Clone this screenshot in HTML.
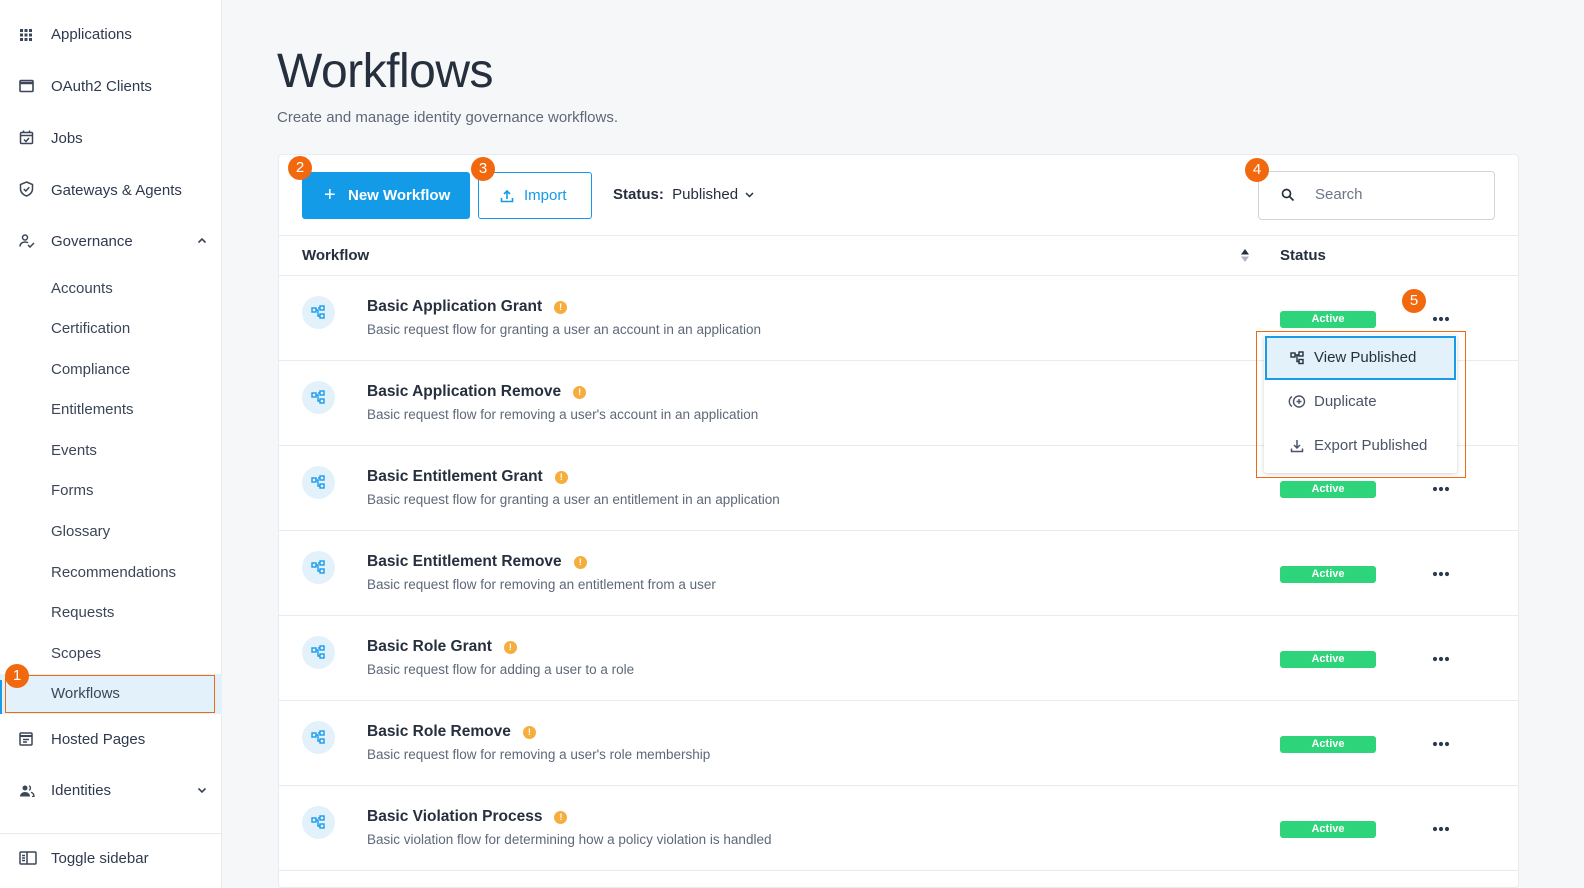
<!DOCTYPE html>
<html><head><meta charset="utf-8"><style>
*{box-sizing:border-box;margin:0;padding:0}
body{width:1584px;height:888px;overflow:hidden;background:#f6f7f9;font-family:"Liberation Sans",sans-serif;color:#2e3a4d;position:relative}
.abs{position:absolute}
.side{left:0;top:0;width:222px;height:888px;background:#fff;border-right:1px solid #e8ebef}
.nav{position:absolute;left:51px;font-size:15px;color:#2e3a4d}
.sub{position:absolute;left:51px;font-size:15px;color:#3b4658}
.ic{position:absolute;left:19px}
.badge{position:absolute;width:24px;height:24px;border-radius:50%;background:#f2680f;color:#fff;font-size:15px;text-align:center;line-height:24px}
.card{left:278px;top:154px;width:1241px;height:734px;background:#fff;border:1px solid #e8ebef;border-radius:4px}
.row{position:absolute;left:278px;width:1241px;height:85px;border-top:1px solid #e8ebef}
.wic{position:absolute;left:24px;top:20px;width:33px;height:33px;border-radius:50%;background:#e3f1fb}
.wic svg{position:absolute;left:9px;top:9px}
.t{position:absolute;left:89px;top:22px;font-size:15.5px;font-weight:bold;color:#262f3d}
.d{position:absolute;left:89px;top:46px;font-size:13.5px;color:#5e6878}
.warn{display:inline-block;width:13px;height:13px;border-radius:50%;background:#f5ae3d;color:#fff;font-size:9px;line-height:13px;text-align:center;margin-left:12px;vertical-align:1px}
.act{position:absolute;left:1002px;top:35px;width:96px;height:17px;background:#2ed47a;color:#fff;font-size:11px;font-weight:bold;text-align:center;line-height:17px;border-radius:3px}
.dots{position:absolute;left:1154px;top:40px}
</style></head><body>
<div class="abs side">
<svg class="ic" style="top:28px" width="14" height="14" viewBox="0 0 14 14" fill="#3b4658"><rect x="1" y="1" width="3" height="3"/><rect x="5.5" y="1" width="3" height="3"/><rect x="10" y="1" width="3" height="3"/><rect x="1" y="5.5" width="3" height="3"/><rect x="5.5" y="5.5" width="3" height="3"/><rect x="10" y="5.5" width="3" height="3"/><rect x="1" y="10" width="3" height="3"/><rect x="5.5" y="10" width="3" height="3"/><rect x="10" y="10" width="3" height="3"/></svg>
<div class="nav" style="top:26px">Applications</div>
<svg class="ic" style="top:79px" width="15" height="14" viewBox="0 0 15 14" fill="none" stroke="#3b4658" stroke-width="1.6"><rect x="1" y="1.5" width="13" height="11" rx="1"/><line x1="1" y1="4" x2="14" y2="4" stroke-width="2.5"/></svg>
<div class="nav" style="top:78px">OAuth2 Clients</div>
<svg class="ic" style="top:130px" width="15" height="15" viewBox="0 0 15 15" fill="none" stroke="#3b4658" stroke-width="1.5"><rect x="1.5" y="2.5" width="12" height="11" rx="1"/><line x1="1.5" y1="5.5" x2="13.5" y2="5.5"/><line x1="4.5" y1="0.5" x2="4.5" y2="3"/><line x1="10.5" y1="0.5" x2="10.5" y2="3"/><path d="M5 9.5l2 2 3-3.5"/></svg>
<div class="nav" style="top:130px">Jobs</div>
<svg class="ic" style="top:181px" width="15" height="16" viewBox="0 0 15 16" fill="none" stroke="#3b4658" stroke-width="1.5"><path d="M7.5 1L13.5 3.5V8c0 3.5-3 6-6 7-3-1-6-3.5-6-7V3.5z"/><path d="M4.8 8l2 2 3.5-3.8"/></svg>
<div class="nav" style="top:182px">Gateways &amp; Agents</div>
<svg class="ic" style="top:234px" width="16" height="14" viewBox="0 0 16 14" fill="none" stroke="#3b4658" stroke-width="1.5"><circle cx="6" cy="3.5" r="2.5"/><path d="M1 12.5c0-3 2.5-4.5 5-4.5 1.3 0 2.3.3 3 .8"/><path d="M9 11l2 2 4-4"/></svg>
<div class="nav" style="top:233px">Governance</div>
<svg class="abs" style="left:197px;top:237px" width="10" height="7" viewBox="0 0 10 7" fill="none" stroke="#3b4658" stroke-width="1.6"><path d="M1.5 5.5L5 2l3.5 3.5"/></svg>
<div class="sub" style="top:280px">Accounts</div>
<div class="sub" style="top:320px">Certification</div>
<div class="sub" style="top:361px">Compliance</div>
<div class="sub" style="top:401px">Entitlements</div>
<div class="sub" style="top:442px">Events</div>
<div class="sub" style="top:482px">Forms</div>
<div class="sub" style="top:523px">Glossary</div>
<div class="sub" style="top:564px">Recommendations</div>
<div class="sub" style="top:604px">Requests</div>
<div class="sub" style="top:645px">Scopes</div>
<div class="abs" style="left:0;top:674px;width:222px;height:40px;background:#e3f1fb"></div>
<div class="abs" style="left:0;top:680px;width:2px;height:34px;background:#1a9be8"></div>
<div class="abs" style="left:5px;top:675px;width:210px;height:38px;border:1px solid #f2680f"></div>
<div class="sub" style="top:685px">Workflows</div>
<div class="badge" style="left:5px;top:664px">1</div>
<svg class="ic" style="top:732px" width="14" height="14" viewBox="0 0 14 14" fill="none" stroke="#3b4658" stroke-width="1.5"><rect x="1" y="1" width="12" height="12" rx="1"/><line x1="1" y1="4" x2="13" y2="4" stroke-width="2"/><line x1="4" y1="7.5" x2="10" y2="7.5"/><line x1="4" y1="10" x2="8" y2="10"/></svg>
<div class="nav" style="top:731px">Hosted Pages</div>
<svg class="ic" style="top:785px" width="16" height="12" viewBox="0 0 16 12" fill="#3b4658"><circle cx="6" cy="3" r="2.5"/><path d="M1 11.5c0-3 2.5-4.5 5-4.5s5 1.5 5 4.5z"/><path d="M10 .8a2.4 2.4 0 010 4.4M12 7.3c1.8.6 3 1.9 3 4.2h-2" fill="none" stroke="#3b4658" stroke-width="1.3"/></svg>
<div class="nav" style="top:782px">Identities</div>
<svg class="abs" style="left:197px;top:787px" width="10" height="7" viewBox="0 0 10 7" fill="none" stroke="#3b4658" stroke-width="1.6"><path d="M1.5 1.5L5 5l3.5-3.5"/></svg>
<div class="abs" style="left:0;top:833px;width:222px;height:1px;background:#e8ebef"></div>
<svg class="ic" style="top:851px" width="18" height="14" viewBox="0 0 18 14" fill="none" stroke="#3b4658" stroke-width="1.5"><rect x="1" y="1" width="16" height="12" rx="1"/><line x1="8" y1="1" x2="8" y2="13"/><line x1="3" y1="4.5" x2="6" y2="4.5"/><line x1="3" y1="7" x2="6" y2="7"/><line x1="3" y1="9.5" x2="6" y2="9.5"/></svg>
<div class="nav" style="top:850px">Toggle sidebar</div>
</div>

<div class="abs" style="left:277px;top:44px;font-size:48px;font-weight:300;color:#262f3d;letter-spacing:-0.5px">Workflows</div>
<div class="abs" style="left:277px;top:109px;font-size:15px;color:#5e6878">Create and manage identity governance workflows.</div>

<div class="abs card"></div>
<div class="abs" style="left:302px;top:172px;width:168px;height:47px;background:#139be8;border-radius:3px;color:#fff;font-size:15px;font-weight:bold;line-height:47px"><span style="position:absolute;left:22px;font-size:20px;font-weight:normal">+</span><span style="position:absolute;left:46px">New Workflow</span></div>
<div class="badge" style="left:288px;top:156px">2</div>
<div class="abs" style="left:478px;top:172px;width:114px;height:47px;border:1px solid #139be8;border-radius:3px;color:#139be8;font-size:15px;line-height:45px">
<svg style="position:absolute;left:21px;top:16px" width="14" height="14" viewBox="0 0 14 14" fill="none" stroke="#139be8" stroke-width="1.6"><path d="M7 10V2M4 5l3-3 3 3M1.5 9v3.5h11V9"/></svg><span style="position:absolute;left:45px">Import</span></div>
<div class="badge" style="left:471px;top:157px">3</div>
<div class="abs" style="left:613px;top:186px;font-size:15px;color:#262f3d"><b>Status:</b>&nbsp; Published</div>
<svg class="abs" style="left:745px;top:191px" width="9" height="7" viewBox="0 0 9 7" fill="none" stroke="#262f3d" stroke-width="1.5"><path d="M1 2l3.5 3.5L8 2"/></svg>
<div class="abs" style="left:1258px;top:171px;width:237px;height:49px;border:1px solid #cfd5dd;border-radius:4px;background:#fff"></div>
<svg class="abs" style="left:1281px;top:188px" width="14" height="14" viewBox="0 0 14 14" fill="none" stroke="#262f3d" stroke-width="1.7"><circle cx="5.5" cy="5.5" r="4"/><path d="M8.5 8.5l4 4"/></svg>
<div class="abs" style="left:1315px;top:186px;font-size:15px;color:#6b7587">Search</div>
<div class="badge" style="left:1245px;top:158px">4</div>

<div class="abs" style="left:278px;top:235px;width:1241px;height:1px;background:#e8ebef"></div>
<div class="abs" style="left:302px;top:247px;font-size:15px;font-weight:bold;color:#262f3d">Workflow</div>
<svg class="abs" style="left:1240px;top:248px" width="10" height="15" viewBox="0 0 10 15"><path d="M1 6.5L5 1l4 5.5z" fill="#262f3d"/><path d="M1 8.5L5 14l4-5.5z" fill="#b0b6bf"/></svg>
<div class="abs" style="left:1280px;top:247px;font-size:15px;font-weight:bold;color:#262f3d">Status</div>

<div class="row" style="top:275px"><div class="wic"><svg width="15" height="15" viewBox="0 0 15 15" fill="none" stroke="#1a9be8" stroke-width="1.4"><rect x="1" y="3" width="4" height="4"/><rect x="9" y="1" width="4" height="4"/><rect x="9" y="9" width="4" height="4"/><path d="M5 5h2v6h2M7 3h2"/></svg></div><div class="t">Basic Application Grant<span class="warn">!</span></div><div class="d">Basic request flow for granting a user an account in an application</div><div class="act">Active</div><svg class="dots" width="18" height="6"><circle cx="3" cy="3" r="2.1" fill="#2e3a4d"/><circle cx="9" cy="3" r="2.1" fill="#2e3a4d"/><circle cx="15" cy="3" r="2.1" fill="#2e3a4d"/></svg></div>
<div class="row" style="top:360px"><div class="wic"><svg width="15" height="15" viewBox="0 0 15 15" fill="none" stroke="#1a9be8" stroke-width="1.4"><rect x="1" y="3" width="4" height="4"/><rect x="9" y="1" width="4" height="4"/><rect x="9" y="9" width="4" height="4"/><path d="M5 5h2v6h2M7 3h2"/></svg></div><div class="t">Basic Application Remove<span class="warn">!</span></div><div class="d">Basic request flow for removing a user's account in an application</div></div>
<div class="row" style="top:445px"><div class="wic"><svg width="15" height="15" viewBox="0 0 15 15" fill="none" stroke="#1a9be8" stroke-width="1.4"><rect x="1" y="3" width="4" height="4"/><rect x="9" y="1" width="4" height="4"/><rect x="9" y="9" width="4" height="4"/><path d="M5 5h2v6h2M7 3h2"/></svg></div><div class="t">Basic Entitlement Grant<span class="warn">!</span></div><div class="d">Basic request flow for granting a user an entitlement in an application</div><div class="act">Active</div><svg class="dots" width="18" height="6"><circle cx="3" cy="3" r="2.1" fill="#2e3a4d"/><circle cx="9" cy="3" r="2.1" fill="#2e3a4d"/><circle cx="15" cy="3" r="2.1" fill="#2e3a4d"/></svg></div>
<div class="row" style="top:530px"><div class="wic"><svg width="15" height="15" viewBox="0 0 15 15" fill="none" stroke="#1a9be8" stroke-width="1.4"><rect x="1" y="3" width="4" height="4"/><rect x="9" y="1" width="4" height="4"/><rect x="9" y="9" width="4" height="4"/><path d="M5 5h2v6h2M7 3h2"/></svg></div><div class="t">Basic Entitlement Remove<span class="warn">!</span></div><div class="d">Basic request flow for removing an entitlement from a user</div><div class="act">Active</div><svg class="dots" width="18" height="6"><circle cx="3" cy="3" r="2.1" fill="#2e3a4d"/><circle cx="9" cy="3" r="2.1" fill="#2e3a4d"/><circle cx="15" cy="3" r="2.1" fill="#2e3a4d"/></svg></div>
<div class="row" style="top:615px"><div class="wic"><svg width="15" height="15" viewBox="0 0 15 15" fill="none" stroke="#1a9be8" stroke-width="1.4"><rect x="1" y="3" width="4" height="4"/><rect x="9" y="1" width="4" height="4"/><rect x="9" y="9" width="4" height="4"/><path d="M5 5h2v6h2M7 3h2"/></svg></div><div class="t">Basic Role Grant<span class="warn">!</span></div><div class="d">Basic request flow for adding a user to a role</div><div class="act">Active</div><svg class="dots" width="18" height="6"><circle cx="3" cy="3" r="2.1" fill="#2e3a4d"/><circle cx="9" cy="3" r="2.1" fill="#2e3a4d"/><circle cx="15" cy="3" r="2.1" fill="#2e3a4d"/></svg></div>
<div class="row" style="top:700px"><div class="wic"><svg width="15" height="15" viewBox="0 0 15 15" fill="none" stroke="#1a9be8" stroke-width="1.4"><rect x="1" y="3" width="4" height="4"/><rect x="9" y="1" width="4" height="4"/><rect x="9" y="9" width="4" height="4"/><path d="M5 5h2v6h2M7 3h2"/></svg></div><div class="t">Basic Role Remove<span class="warn">!</span></div><div class="d">Basic request flow for removing a user's role membership</div><div class="act">Active</div><svg class="dots" width="18" height="6"><circle cx="3" cy="3" r="2.1" fill="#2e3a4d"/><circle cx="9" cy="3" r="2.1" fill="#2e3a4d"/><circle cx="15" cy="3" r="2.1" fill="#2e3a4d"/></svg></div>
<div class="row" style="top:785px;border-bottom:1px solid #e8ebef;height:86px"><div class="wic"><svg width="15" height="15" viewBox="0 0 15 15" fill="none" stroke="#1a9be8" stroke-width="1.4"><rect x="1" y="3" width="4" height="4"/><rect x="9" y="1" width="4" height="4"/><rect x="9" y="9" width="4" height="4"/><path d="M5 5h2v6h2M7 3h2"/></svg></div><div class="t">Basic Violation Process<span class="warn">!</span></div><div class="d">Basic violation flow for determining how a policy violation is handled</div><div class="act">Active</div><svg class="dots" width="18" height="6"><circle cx="3" cy="3" r="2.1" fill="#2e3a4d"/><circle cx="9" cy="3" r="2.1" fill="#2e3a4d"/><circle cx="15" cy="3" r="2.1" fill="#2e3a4d"/></svg></div>

<div class="badge" style="left:1402px;top:289px">5</div>
<div class="abs" style="left:1264px;top:335px;width:193px;height:138px;background:#fff;border-radius:3px;box-shadow:0 1px 4px rgba(0,0,0,.18)"></div>
<div class="abs" style="left:1265px;top:336px;width:191px;height:44px;background:#e3f1fb;border:2px solid #1a9be8"></div>
<svg class="abs" style="left:1290px;top:351px" width="15" height="14" viewBox="0 0 15 14" fill="none" stroke="#262f3d" stroke-width="1.4"><rect x="1" y="2" width="4" height="4"/><rect x="9" y="1" width="4" height="4"/><rect x="9" y="8.5" width="4" height="4"/><path d="M5 4h4M7 4v6.5h2"/></svg>
<div class="abs" style="left:1314px;top:349px;font-size:15px;color:#262f3d">View Published</div>
<svg class="abs" style="left:1288px;top:394px" width="19" height="15" viewBox="0 0 19 15" fill="none" stroke="#4a5466" stroke-width="1.4"><path d="M4 2.5a6 6 0 000 10"/><circle cx="11" cy="7.5" r="5.5"/><path d="M11 5v5M8.5 7.5h5"/></svg>
<div class="abs" style="left:1314px;top:393px;font-size:15px;color:#4a5466">Duplicate</div>
<svg class="abs" style="left:1290px;top:439px" width="14" height="14" viewBox="0 0 14 14" fill="none" stroke="#4a5466" stroke-width="1.5"><path d="M7 1v8M4 6l3 3 3-3M1.5 9.5v3h11v-3"/></svg>
<div class="abs" style="left:1314px;top:437px;font-size:15px;color:#4a5466">Export Published</div>
<div class="abs" style="left:1256px;top:331px;width:210px;height:147px;border:1px solid #f2680f"></div>
</body></html>
